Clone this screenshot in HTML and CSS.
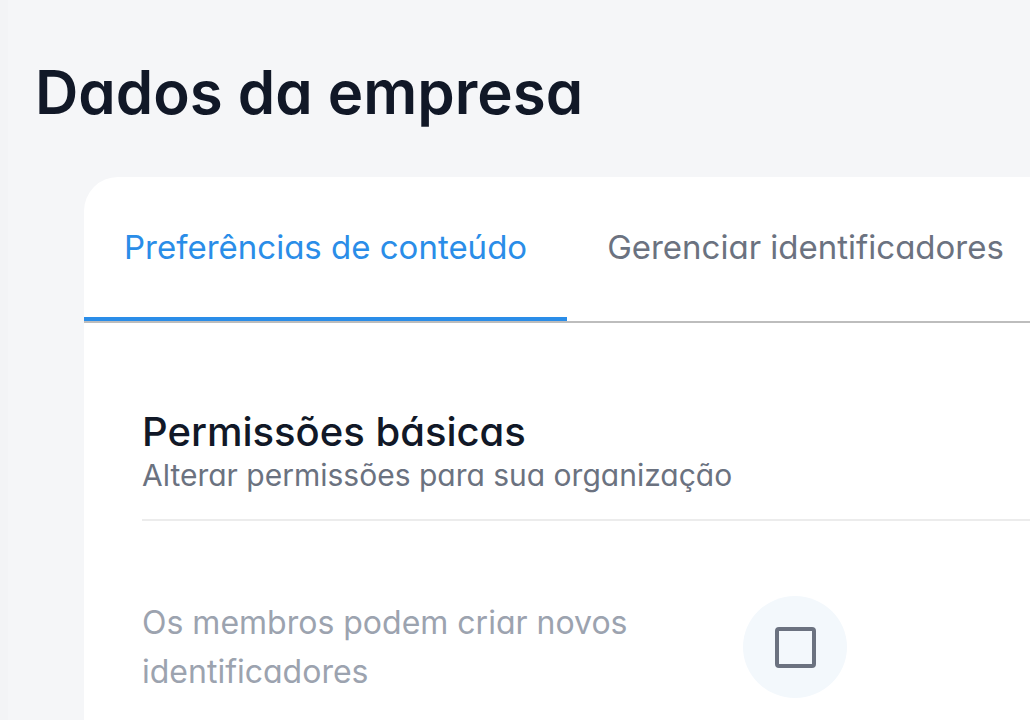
FILE: index.html
```html
<!DOCTYPE html>
<html lang="pt-BR">
<head>
<meta charset="utf-8">
<title>Dados da empresa</title>
<link rel="stylesheet" href="styles.css">
</head>
<body>
<div class="shell">
  <div class="rail"></div>
  <main class="page">
    <h1 class="title">Dados da empresa</h1>
    <section class="card">
      <nav class="tabs">
        <div class="tab active">Preferências de conteúdo</div>
        <div class="tab">Gerenciar identificadores</div>
      </nav>
      <div class="section">
        <div class="section-head">
          <h2 class="section-title">Permissões básicas</h2>
          <p class="section-sub">Alterar permissões para sua organização</p>
        </div>
        <div class="divider"></div>
        <div class="row">
          <div class="row-label">Os membros podem criar novos identificadores</div>
          <div class="check-wrap"><span class="checkbox"></span></div>
        </div>
      </div>
    </section>
  </main>
</div>
</body>
</html>
```

FILE: styles.css
```css
* { box-sizing: border-box; }
html, body { margin: 0; padding: 0; }
body {
  width: 1030px;
  height: 720px;
  overflow: hidden;
  background: #f5f6f8;
  font-family: Inter, "Noto Sans", sans-serif;
  font-feature-settings: "cv11";
}
.shell { display: flex; height: 720px; }
.rail { width: 8px; flex: none; background: #f3f4f6; }
.page { flex: 1; display: flex; flex-direction: column; min-width: 0; }
.title {
  margin: 58px 0 0 27px;
  font-size: 60px;
  font-weight: 600;
  line-height: 68px;
  color: #111827;
  letter-spacing: 0;
}
.card {
  margin: 51px -40px 0 76px;
  flex: 1;
  background: #fff;
  border-top-left-radius: 34px;
  display: flex;
  flex-direction: column;
}
.tabs {
  display: flex;
  border-bottom: 2px solid #bdbdbd;
  height: 146px;
}
.tab {
  padding: 0 40px;
  display: flex;
  align-items: center;
  font-size: 33px;
  color: #6b7280;
  border-bottom: 4px solid transparent;
}
.tab.active {
  color: #2a8de8;
  border-bottom-color: #2a8de8;
}
.section { padding: 0 0 0 58px; display: flex; flex-direction: column; }
.section-head { padding-top: 86px; }
.section-title {
  margin: 0;
  font-size: 40px;
  font-weight: 500;
  line-height: 46px;
  color: #111827;
}
.section-sub {
  margin: 0;
  font-size: 30px;
  line-height: 40px;
  color: #6b7280;
}
.divider { height: 2px; background: #ececec; margin-top: 24px; }
.row { display: flex; align-items: center; margin-top: 75px; }
.row-label {
  width: 540px;
  font-size: 32px;
  line-height: 49px;
  color: #9ca3af;
}
.check-wrap {
  width: 104px;
  height: 102px;
  border-radius: 50%;
  background: #f3f8fc;
  display: flex;
  align-items: center;
  justify-content: center;
  margin-left: 61px;
}
.checkbox {
  width: 41px;
  height: 41px;
  border: 4px solid #6b7280;
  border-radius: 4px;
}
```
